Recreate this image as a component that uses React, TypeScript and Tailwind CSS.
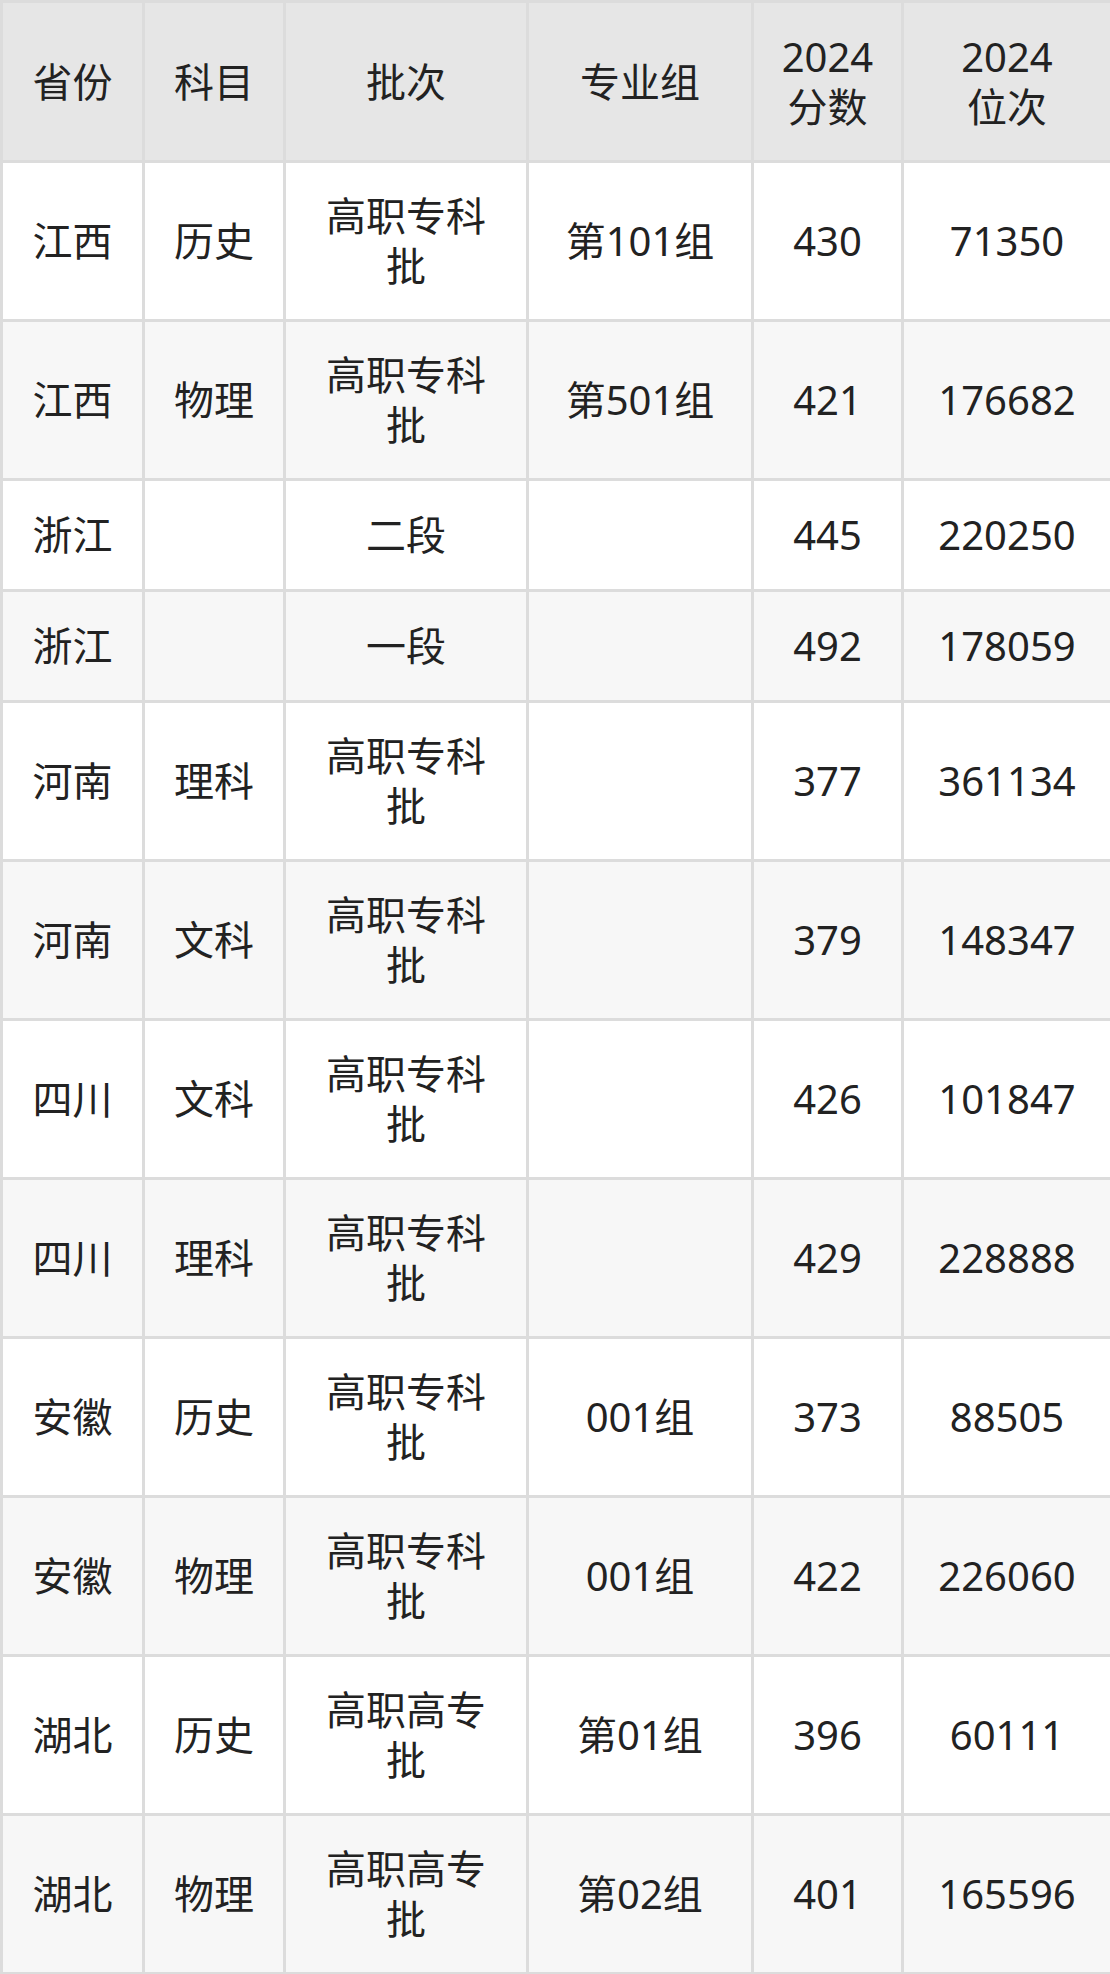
import React from 'react';

type Row = {
  province: string;
  subject: string;
  batch: string;
  group: string;
  score: string;
  rank: string;
  short?: boolean;
};

const rows: Row[] = [
  { province: '江西', subject: '历史', batch: '高职专科批', group: '第101组', score: '430', rank: '71350' },
  { province: '江西', subject: '物理', batch: '高职专科批', group: '第501组', score: '421', rank: '176682' },
  { province: '浙江', subject: '', batch: '二段', group: '', score: '445', rank: '220250', short: true },
  { province: '浙江', subject: '', batch: '一段', group: '', score: '492', rank: '178059', short: true },
  { province: '河南', subject: '理科', batch: '高职专科批', group: '', score: '377', rank: '361134' },
  { province: '河南', subject: '文科', batch: '高职专科批', group: '', score: '379', rank: '148347' },
  { province: '四川', subject: '文科', batch: '高职专科批', group: '', score: '426', rank: '101847' },
  { province: '四川', subject: '理科', batch: '高职专科批', group: '', score: '429', rank: '228888' },
  { province: '安徽', subject: '历史', batch: '高职专科批', group: '001组', score: '373', rank: '88505' },
  { province: '安徽', subject: '物理', batch: '高职专科批', group: '001组', score: '422', rank: '226060' },
  { province: '湖北', subject: '历史', batch: '高职高专批', group: '第01组', score: '396', rank: '60111' },
  { province: '湖北', subject: '物理', batch: '高职高专批', group: '第02组', score: '401', rank: '165596' },
];

const cell = 'border-[3px] border-[#dcdcdc] px-[26px] text-center align-middle';

export default function App() {
  return (
    <div
      className="w-[1110px] bg-white text-[40px] leading-[50px] text-[#222222]"
      style={{ fontFamily: '"Noto Sans", "Noto Sans CJK SC", sans-serif' }}
    >
      <table className="w-[1110px] table-fixed border-collapse">
        <colgroup>
          <col className="w-[142px]" />
          <col className="w-[141px]" />
          <col className="w-[243px]" />
          <col className="w-[225px]" />
          <col className="w-[150px]" />
          <col className="w-[209px]" />
        </colgroup>
        <thead>
          <tr className="h-[160px] bg-[#e6e6e6]">
            <th className={`${cell} font-normal`}>省份</th>
            <th className={`${cell} font-normal`}>科目</th>
            <th className={`${cell} font-normal`}>批次</th>
            <th className={`${cell} font-normal`}>专业组</th>
            <th className={`${cell} font-normal`}>
              2024
              <br />
              分数
            </th>
            <th className={`${cell} font-normal`}>
              2024
              <br />
              位次
            </th>
          </tr>
        </thead>
        <tbody>
          {rows.map((r, i) => (
            <tr
              key={i}
              className={`${r.short ? 'h-[111px]' : 'h-[159px]'} ${i % 2 === 1 ? 'bg-[#f7f7f7]' : 'bg-white'}`}
            >
              <td className={cell}>{r.province}</td>
              <td className={cell}>{r.subject}</td>
              <td className={cell}>{r.batch}</td>
              <td className={cell}>{r.group}</td>
              <td className={cell}>{r.score}</td>
              <td className={cell}>{r.rank}</td>
            </tr>
          ))}
        </tbody>
      </table>
    </div>
  );
}
